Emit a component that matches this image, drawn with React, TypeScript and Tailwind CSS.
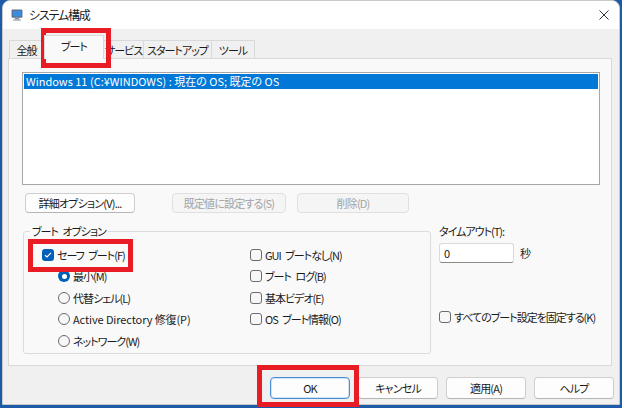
import type { ReactNode } from 'react'

const TEXT = 'text-[11px] leading-[14px] tracking-[-1px] [word-spacing:3px] whitespace-nowrap text-[#1b1b1b]'
const LATIN = 'text-[11px] leading-[14px] tracking-[-0.1px] whitespace-nowrap text-[#1b1b1b]'

function Checkbox({ checked = false }: { checked?: boolean }) {
  if (checked) {
    return (
      <span className="w-[12px] h-[12px] rounded-[3px] bg-[#005fb8] flex items-center justify-center shrink-0">
        <svg width="8" height="8" viewBox="0 0 8 8">
          <path d="M1 4.2 L3 6 L7 1.8" fill="none" stroke="white" strokeWidth="1.2" />
        </svg>
      </span>
    )
  }
  return <span className="w-[12px] h-[12px] rounded-[3px] border border-[#6b6b6b] bg-[#f7f7f7] shrink-0" />
}

function Radio({ checked = false }: { checked?: boolean }) {
  if (checked) {
    return (
      <span className="w-[12px] h-[12px] rounded-full bg-[#005fb8] flex items-center justify-center shrink-0">
        <span className="w-[5px] h-[5px] rounded-full bg-white" />
      </span>
    )
  }
  return <span className="w-[12px] h-[12px] rounded-full border border-[#6b6b6b] bg-[#f7f7f7] shrink-0" />
}

function Btn({
  children,
  width,
  disabled = false,
  focused = false,
  height = 'h-[20px]',
}: {
  children: ReactNode
  width: string
  disabled?: boolean
  focused?: boolean
  height?: string
}) {
  const border = focused
    ? 'border-[#4a90d6] shadow-[inset_0_0_0_1px_#cfe3f7]'
    : disabled
      ? 'border-[#e0e0e0]'
      : 'border-[#cfcfcf] border-b-[#b5b5b5]'
  return (
    <div
      className={`${width} ${height} ${border} border rounded-[4px] flex items-center justify-center text-[11px] tracking-[-0.8px] whitespace-nowrap ${
        disabled ? 'bg-[#f5f5f5] text-[#a3a3a3]' : 'bg-[#fdfdfd] text-[#1b1b1b]'
      }`}
    >
      {children}
    </div>
  )
}

function OptRow({
  children,
  radio,
  checked,
  indent = false,
  latin = false,
}: {
  children: ReactNode
  radio?: boolean
  checked?: boolean
  indent?: boolean
  latin?: boolean
}) {
  return (
    <div className={`h-[21.5px] flex items-center gap-[3px] ${indent ? 'pl-[16px]' : ''}`}>
      {radio ? <Radio checked={checked} /> : <Checkbox checked={checked} />}
      <span className={latin ? LATIN : TEXT}>{children}</span>
    </div>
  )
}

function Tab({ children, width, first = false }: { children: ReactNode; width: string; first?: boolean }) {
  return (
    <div
      className={`${width} h-[18px] border border-b-0 ${first ? '' : 'border-l-0'} border-[#d9d9d9] bg-[#f0f0f0] flex items-center justify-center ${TEXT}`}
    >
      {children}
    </div>
  )
}

function RedBox({ className }: { className: string }) {
  return <div className={`absolute border-[5px] border-[#e81c24] pointer-events-none ${className}`} />
}

export default function App() {
  return (
    <div className="relative w-[622px] h-[408px] overflow-hidden bg-[#1d5aa8] font-['Noto_Sans_CJK_JP','Noto_Sans',sans-serif] [font-feature-settings:'palt']">
      <div className="ml-[2px] w-[618px] h-[405px] rounded-t-[8px] border border-[#c9c9c9] bg-[#f0f0f0] flex flex-col overflow-hidden">
        {/* title bar */}
        <div className="h-[28px] bg-white flex items-center pl-[8px] pr-[10px] shrink-0">
          <svg width="12" height="12" viewBox="0 0 11 11">
            <rect x="0.5" y="0.5" width="10" height="7.5" rx="1" fill="#5d6f86" />
            <rect x="1.6" y="1.6" width="7.8" height="5.3" fill="#3d8be0" />
            <rect x="3.5" y="8" width="4" height="1.5" fill="#7d8a99" />
            <rect x="2" y="9.5" width="7" height="1.2" fill="#9aa5b1" />
          </svg>
          <span className="ml-[6px] text-[12px] tracking-[-1.2px] text-[#1b1b1b]">システム構成</span>
          <svg className="ml-auto" width="10" height="10" viewBox="0 0 10 10">
            <path d="M0.5 0.5 L9.5 9.5 M9.5 0.5 L0.5 9.5" stroke="#333" strokeWidth="1" />
          </svg>
        </div>

        {/* tabs */}
        <div className="h-[29px] flex items-end pl-[6px] shrink-0">
          <Tab width="w-[35px]" first>全般</Tab>
          <div className={`relative z-10 -mb-px w-[60px] h-[24px] border border-b-0 border-[#d9d9d9] bg-[#f9f9f9] flex items-start pt-[3px] justify-center ${TEXT}`}>
            ブート
          </div>
          <Tab width="w-[40px]">サービス</Tab>
          <Tab width="w-[68px]">スタートアップ</Tab>
          <Tab width="w-[43px]">ツール</Tab>
        </div>

        {/* tab panel */}
        <div className="ml-[5px] mr-[7px] h-[308px] border border-[#d9d9d9] bg-[#f9f9f9] pt-[13px] shrink-0">
          <div className="ml-[13px] w-[578px] h-[113px] border border-[#a6a6a6] bg-white p-px">
            <div className="h-[15px] bg-[#0078d7] text-white text-[11px] leading-[15px] pl-[2px] whitespace-nowrap">
              Windows 11 (C:¥WINDOWS) : 現在の OS; 既定の OS
            </div>
          </div>

          <div className="mt-[8px] ml-[16px] flex">
            <Btn width="w-[110px]">詳細オプション(V)...</Btn>
            <div className="ml-[37px]">
              <Btn width="w-[114px]" disabled>既定値に設定する(S)</Btn>
            </div>
            <div className="ml-[11px]">
              <Btn width="w-[112px]" disabled>削除(D)</Btn>
            </div>
          </div>

          <div className="flex items-start">
            {/* boot options group */}
            <div className="relative shrink-0 mt-[18px] ml-[14px] w-[408px] h-[123px] border border-[#dcdcdc] rounded-[3px] pt-[12px] pl-[18px] grid grid-cols-[208px_1fr]">
              <span className={`absolute -top-[8px] left-[6px] px-[2px] bg-[#f9f9f9] ${TEXT}`}>ブート オプション</span>
              <div className="flex flex-col">
                <OptRow checked>セーフ ブート(F)</OptRow>
                <OptRow radio checked indent>最小(M)</OptRow>
                <OptRow radio indent>代替シェル(L)</OptRow>
                <OptRow radio indent latin>Active Directory 修復(P)</OptRow>
                <OptRow radio indent>ネットワーク(W)</OptRow>
              </div>
              <div className="flex flex-col">
                <OptRow>GUI ブートなし(N)</OptRow>
                <OptRow>ブート ログ(B)</OptRow>
                <OptRow>基本ビデオ(E)</OptRow>
                <OptRow>OS ブート情報(O)</OptRow>
              </div>
            </div>

            {/* timeout column */}
            <div className="ml-[8px] mt-[11px] flex flex-col">
              <span className={TEXT}>タイムアウト(T):</span>
              <div className="mt-[5px] flex items-center">
                <div className="w-[75px] h-[20px] bg-white border border-[#dadada] border-b-[#8a8a8a] rounded-[3px] flex items-center pl-[4px] text-[11px] text-[#1b1b1b]">0</div>
                <span className={`ml-[6px] ${TEXT}`}>秒</span>
              </div>
              <div className="mt-[44px] h-[20px] flex items-center gap-[3px]">
                <Checkbox />
                <span className={TEXT}>すべてのブート設定を固定する(K)</span>
              </div>
            </div>
          </div>
        </div>

        {/* footer buttons */}
        <div className="mt-[11px] flex justify-end pr-[5px] gap-[8px]">
          <Btn width="w-[80px]" height="h-[22px]" focused>OK</Btn>
          <Btn width="w-[80px]" height="h-[22px]">キャンセル</Btn>
          <Btn width="w-[80px]" height="h-[22px]">適用(A)</Btn>
          <Btn width="w-[80px]" height="h-[22px]">ヘルプ</Btn>
        </div>
      </div>

      {/* highlight boxes */}
      <RedBox className="left-[41px] top-[28px] w-[70px] h-[40px]" />
      <RedBox className="left-[28px] top-[239px] w-[105px] h-[33px]" />
      <RedBox className="left-[257px] top-[365px] w-[102px] h-[42px]" />
    </div>
  )
}
